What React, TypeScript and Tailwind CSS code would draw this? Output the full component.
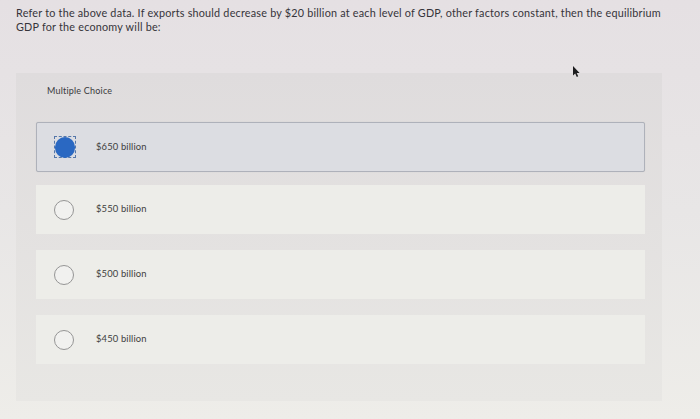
import React from "react";

const options = ["$650 billion", "$550 billion", "$500 billion", "$450 billion"];

export default function App() {
  return (
    <div
      className="relative w-[700px] h-[419px] overflow-hidden bg-linear-to-b from-[#e5e0e3] via-[#e8e6e6] to-[#eeede9] text-[#2e2e30]"
      style={{ fontFamily: "Lato, 'Open Sans', Arial, sans-serif" }}
    >
      <div className="pl-[16px] pt-[6px] text-[10.8px] leading-[14px] tracking-[0.22px] text-[#35343a]">
        Refer to the above data. If exports should decrease by $20 billion at each level of GDP, other factors constant, then the equilibrium
        <br />
        GDP for the economy will be:
      </div>

      <div className="ml-[16px] mt-[39px] w-[646px] h-[328px] bg-linear-to-b from-[#dfdcdd] to-[#e8e7e4] pt-[12px] pl-[20px] pr-[17px]">
        <div className="pl-[11px] text-[9px] leading-[12px] tracking-[0.2px] text-[#3a393c]">Multiple Choice</div>
        <div className="mt-[25px] flex flex-col">
          {options.map((o, i) => {
            const selected = i === 0;
            return (
              <div
                key={o}
                className={
                  selected
                    ? "h-[50px] mb-[13px] flex items-center rounded-[2px] border border-[#aeb1ba] bg-[#dcdde2] pl-[17px] shadow-[0_0_1px_rgba(0,0,0,0.12)]"
                    : "h-[49px] mb-[16px] flex items-center bg-[#edede9] pl-[18px]"
                }
              >
                {selected ? (
                  <div className="w-[22px] h-[22px] border border-dashed border-[#5577aa] flex items-center justify-center">
                    <div className="w-[21px] h-[21px] rounded-full bg-[#2a68c2]" />
                  </div>
                ) : (
                  <div className="w-[20px] h-[20px] rounded-full border border-[#959595] bg-[#f1f1ef]" />
                )}
                <span className={(selected ? "ml-[20px]" : "ml-[22px]") + " text-[9.4px] tracking-[0.15px] text-[#3e3e40]"}>{o}</span>
              </div>
            );
          })}
        </div>
      </div>

      <svg className="absolute left-[572px] top-[66px]" width="9" height="12" viewBox="0 0 9 12">
        <path d="M1 0 L1 9.5 L3.2 7.6 L4.8 11 L6.2 10.3 L4.7 7.1 L7.6 7 Z" fill="#1d1d1f" />
      </svg>
    </div>
  );
}
